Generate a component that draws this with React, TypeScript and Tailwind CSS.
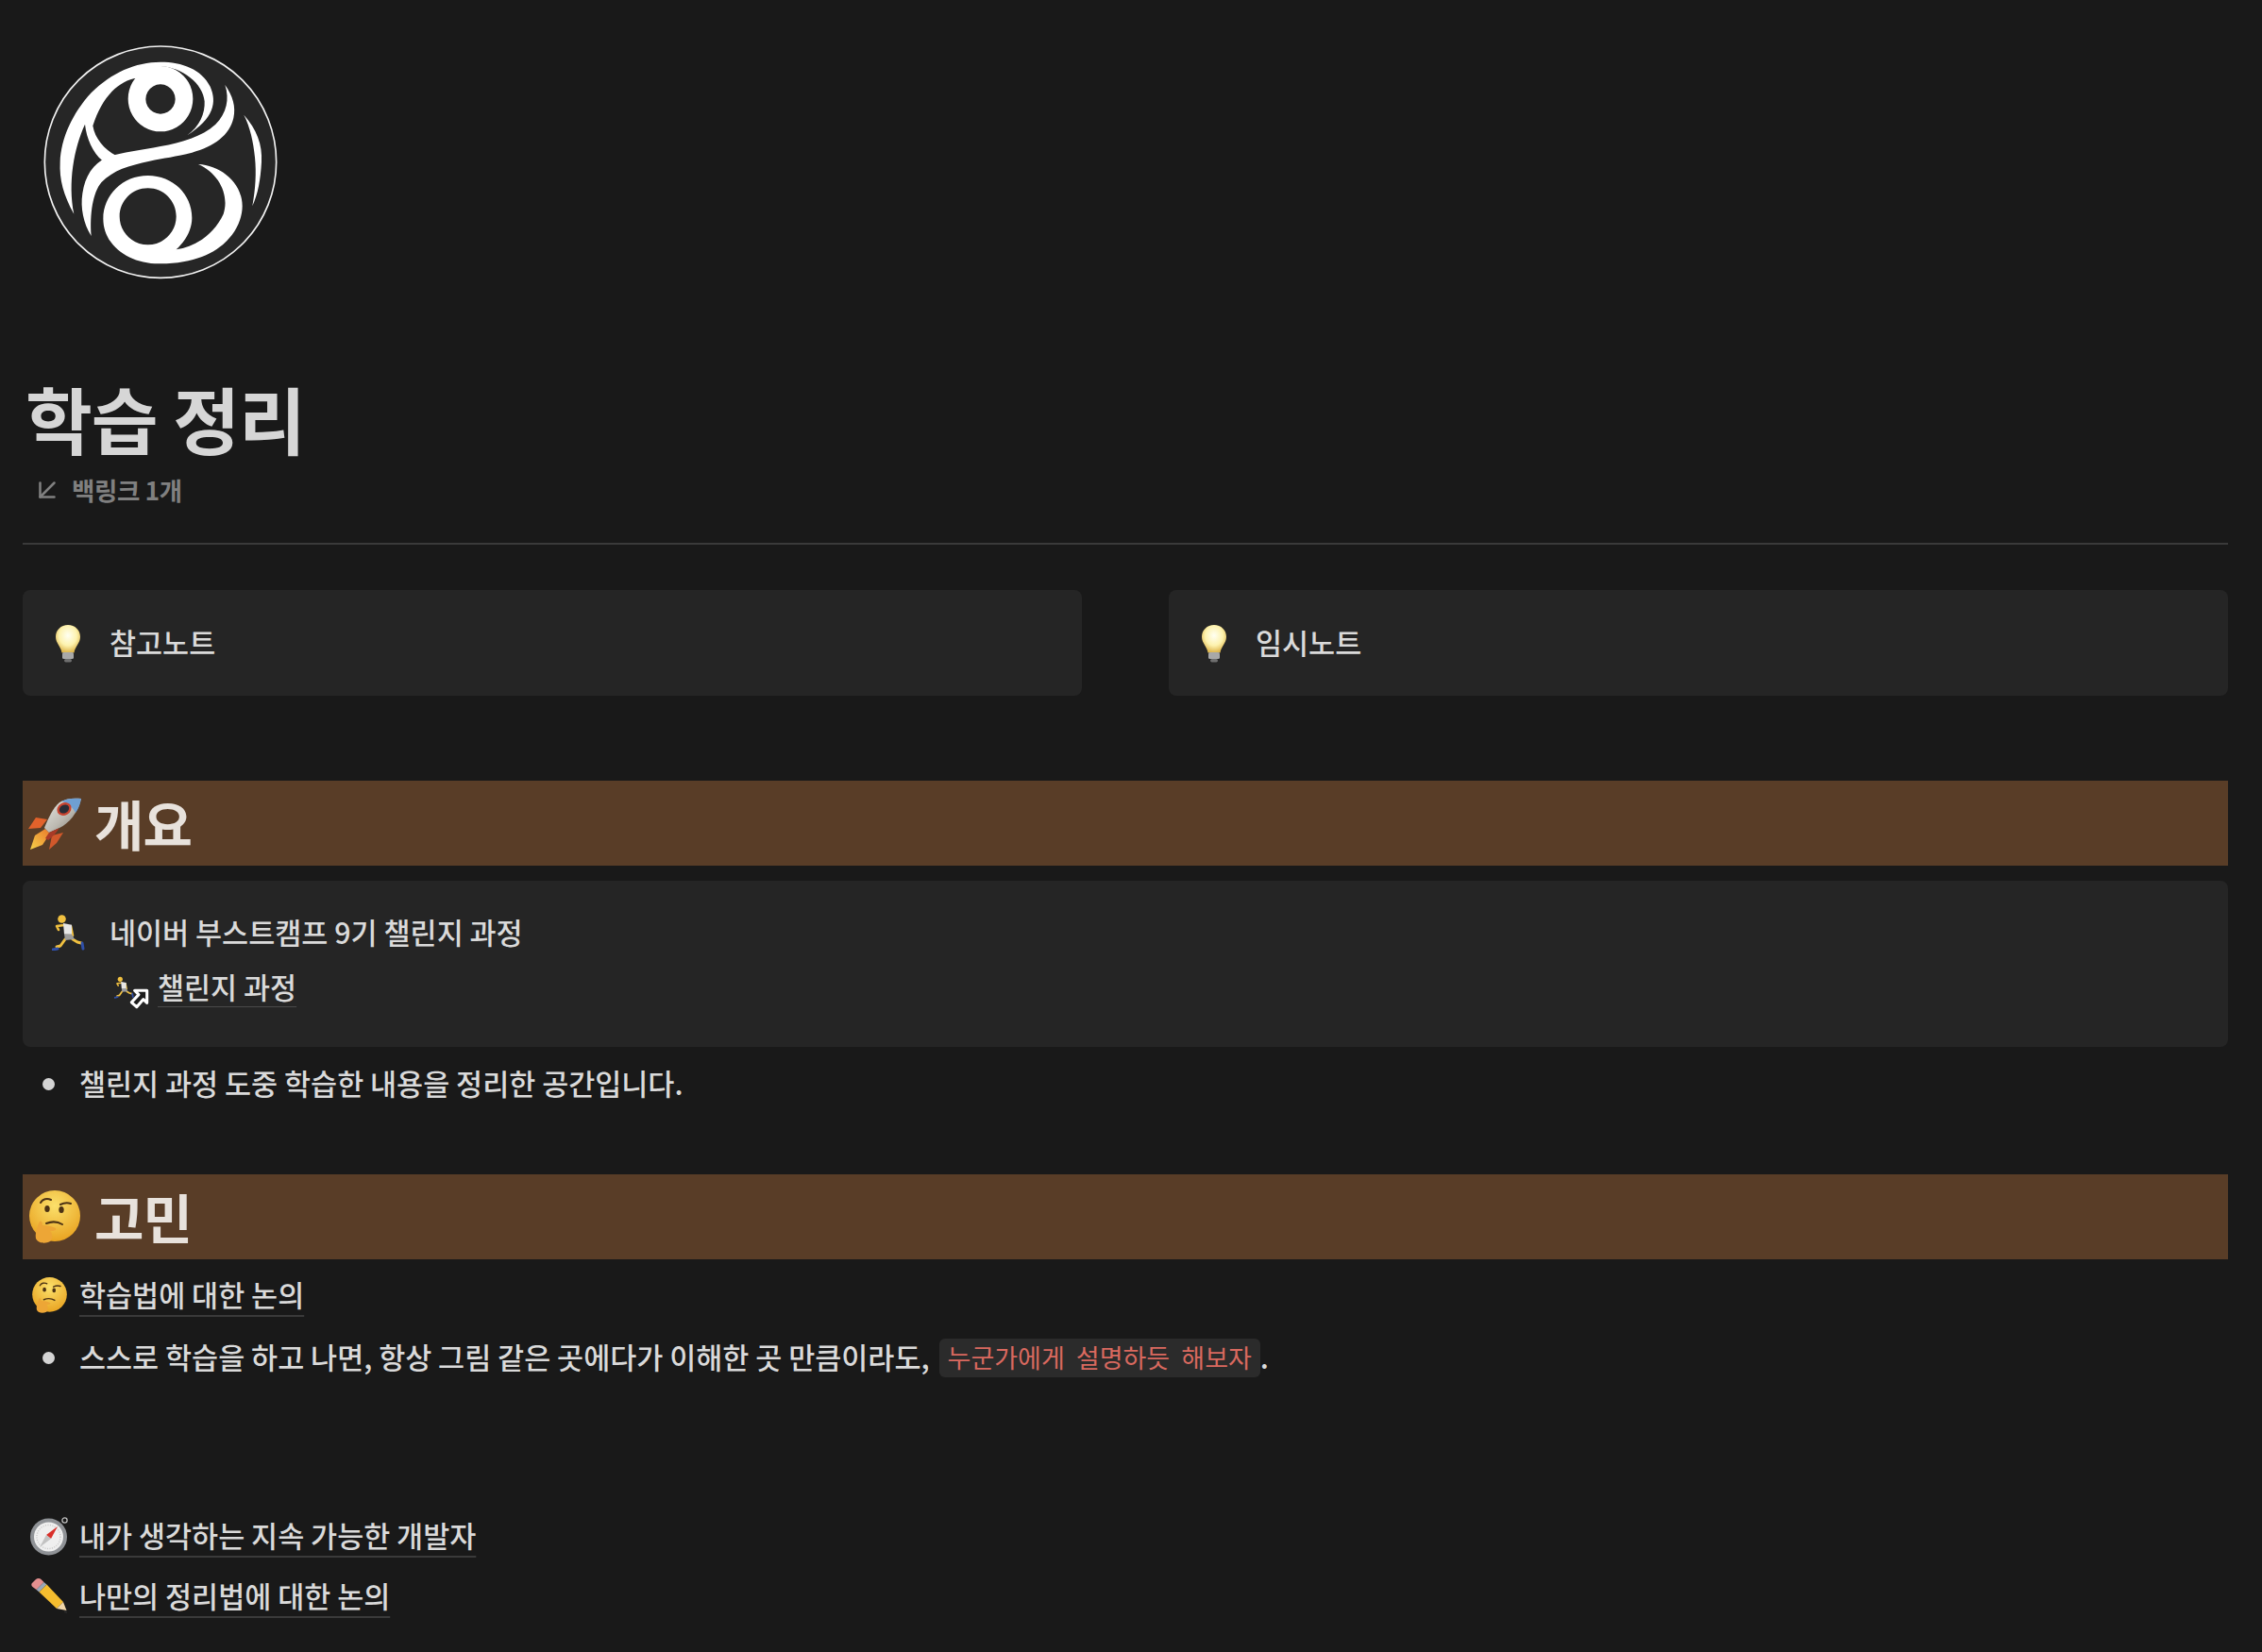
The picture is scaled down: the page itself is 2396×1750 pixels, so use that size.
import type { ReactNode } from "react";
import { ArrowDownLeft } from "lucide-react";

const Logo = () => (
  <svg viewBox="0 0 840 840" className="block w-[280px] h-[280px]">
    <circle cx="420" cy="425" r="368" fill="#262626" stroke="#f2f2f2" strokeWidth="5" />
    <g fill="#ffffff">
      <path fillRule="evenodd" d="M420 120a103 104 0 1 0 .01 0ZM420 178a47 47 0 1 1-.01 0Z" />
      <path d="M145 590C112 530 98 480 101 425C104 350 140 270 200 205C265 140 340 108 420 107C490 107 550 130 578 185C600 235 590 285 505 340C545 312 562 270 560 232C555 175 490 125 420 120L345 158C290 165 235 215 205 310C212 350 240 385 280 405L235 420C205 395 185 350 180 305C145 380 125 490 145 590Z" />
      <path d="M625 180C650 215 660 250 652 285C640 340 590 375 520 395C470 408 430 412 385 422C320 436 270 450 232 490C205 522 195 590 200 660C175 620 165 570 172 525C180 470 205 430 250 410C300 392 360 388 420 375C490 362 550 345 595 305C630 270 640 225 625 180Z" />
      <path fillRule="evenodd" d="M380 468C460 468 520 528 520 602C520 640 500 675 470 703C530 695 590 655 620 590C640 530 605 460 540 432C610 435 680 490 680 565C680 640 610 748 420 748C320 750 238 690 238 605C238 530 300 468 380 468ZM380 508C330 508 290 548 290 598C290 648 330 688 380 688C430 688 470 648 470 598C470 548 430 508 380 508Z" />
      <path d="M685 275C725 320 745 370 741 425C738 480 730 525 712 565C722 510 725 460 720 410C715 360 705 315 685 275Z" />
    </g>
  </svg>
);

const Bulb = () => (
  <svg viewBox="0 0 28 41" className="w-[28px] h-[41px] shrink-0">
    <defs>
      <radialGradient id="bulbGlow" cx="50%" cy="38%" r="60%">
        <stop offset="0%" stopColor="#fffff2" />
        <stop offset="60%" stopColor="#fdf2ae" />
        <stop offset="100%" stopColor="#dfb850" />
      </radialGradient>
    </defs>
    <path d="M14 1C6.500 1 1 6.500 1 13.500c0 7 5.500 10 6.500 17h13c1-7 6.500-10 6.500-17C27 6.500 21.500 1 14 1Z" fill="url(#bulbGlow)" />
    <rect x="8" y="30" width="12" height="7" rx="1.500" fill="#a8a8a8" />
    <rect x="10" y="37" width="8" height="3.500" rx="1.700" fill="#6f6f6f" />
  </svg>
);

const Rocket = () => (
  <svg viewBox="0 0 57 56" className="w-[57px] h-[56px] shrink-0">
    <defs>
      <linearGradient id="rocketBody" x1="0" y1="0" x2="1" y2="1">
        <stop offset="0%" stopColor="#e8e8e4" />
        <stop offset="55%" stopColor="#bdbab2" />
        <stop offset="100%" stopColor="#77736a" />
      </linearGradient>
      <linearGradient id="rocketFlame" x1="0" y1="1" x2="1" y2="0">
        <stop offset="0%" stopColor="#f6d24a" />
        <stop offset="100%" stopColor="#e9792b" />
      </linearGradient>
    </defs>
    <path d="M0 34L8 22l12 2-7 9Z" fill="#e2622b" />
    <path d="M22 56l3-15 12-3-7 11Z" fill="#d0582b" />
    <path d="M2 56L7 41l11-7 5 5-8 12Z" fill="url(#rocketFlame)" />
    <path d="M56 2C47 1 39 2 33 6 26 12 21 23 17 33l5 5 11-5C43 28 52 18 56 2Z" fill="url(#rocketBody)" />
    <path d="M56 2C47 1 40 2 35 5 41 6 47 11 50 17 53 13 55 8 56 2Z" fill="#6f9fd2" />
    <path d="M22 38l11-5c-4 6-7 9-12 13l-3-2Z" fill="#a83a26" />
    <ellipse cx="38" cy="13" rx="8" ry="6.500" transform="rotate(-30 38 13)" fill="#c7432f" />
    <ellipse cx="38" cy="13" rx="5.500" ry="4.200" transform="rotate(-30 38 13)" fill="#2a2d36" />
  </svg>
);

const Runner = ({ className }: { className: string }) => (
  <svg viewBox="0 0 35 38" className={className}>
    <g fill="none" strokeLinecap="round" strokeLinejoin="round">
      <path d="M14 26L9 33 5 34" stroke="#f0c040" strokeWidth="3" />
      <path d="M22 26l5 3 4 1" stroke="#f0c040" strokeWidth="3" />
      <path d="M13 11L5 12l2 4" stroke="#f0c040" strokeWidth="2.600" />
      <path d="M20 12l2 10" stroke="#f0c040" strokeWidth="2.600" />
      <path d="M1 37l5-1" stroke="#2f4fa8" strokeWidth="3" />
      <path d="M32 30l1 6" stroke="#2f4fa8" strokeWidth="3" />
    </g>
    <circle cx="10.500" cy="4.500" r="4.300" fill="#f0c040" />
    <path d="M12 9l9 1.700V21l-8-.3Z" fill="#e6e6e6" />
    <path d="M13 20.500h8l3 5.500-10 1Z" fill="#9c9c9c" />
  </svg>
);

const Thinking = ({ className, id }: { className: string; id: string }) => (
  <svg viewBox="0 0 54 56" className={className}>
    <defs>
      <radialGradient id={id} cx="50%" cy="30%" r="70%">
        <stop offset="0%" stopColor="#fbe06b" />
        <stop offset="100%" stopColor="#e9a422" />
      </radialGradient>
    </defs>
    <circle cx="27" cy="27" r="27" fill={`url(#${id})`} />
    <path d="M12 13c2-4 7-5 11-3M33 15c4-2 8-2 11-1" stroke="#4c3214" strokeWidth="2" fill="none" strokeLinecap="round" />
    <ellipse cx="19" cy="19.500" rx="2.700" ry="3.500" fill="#4c3214" />
    <ellipse cx="34" cy="20.500" rx="2.700" ry="3.500" fill="#4c3214" />
    <path d="M18 35c5-2 12-2 17 1" stroke="#4c3214" strokeWidth="2" fill="none" strokeLinecap="round" />
    <path d="M11 33c2-1 3 1 3 4 5 0 10 1 14 3 1 2-1 3-6 3 3 2 3 9 0 11-5 3-13 2-15-3-1-6 1-12 4-18Z" fill="#eda636" />
  </svg>
);

const Compass = () => (
  <svg viewBox="0 0 41 41" className="w-[41px] h-[41px] shrink-0">
    <circle cx="36.500" cy="3.500" r="2.600" fill="none" stroke="#bdbdbd" strokeWidth="1.300" />
    <circle cx="19.500" cy="21" r="19.500" fill="#8f9296" />
    <circle cx="19.500" cy="21" r="15.500" fill="#efefef" />
    <circle cx="19.500" cy="21" r="12.500" fill="none" stroke="#c9c9c9" strokeWidth="1.500" strokeDasharray="1 1.500" />
    <path d="M29 10l-7 13-5-4Z" fill="#d92f2a" />
    <path d="M10 32l7-13 5 4Z" fill="#c2c2c2" />
  </svg>
);

const Pencil = () => (
  <svg viewBox="0 0 40 40" className="w-[40px] h-[40px] shrink-0">
    <path d="M1 6l4-4c1.500-1.500 4-1.500 5.500 0l3 3-8 8-4-3C0 8.500 0 7 1 6Z" fill="#e48f8f" />
    <path d="M5.500 13l8-8 3 2.500-8 8Z" fill="#9aa7b8" />
    <path d="M8.500 15.500l8-8L34 26l-7 7Z" fill="#f5bd2f" />
    <path d="M27 33l7-7 3.500 9Z" fill="#f0d5a8" />
    <path d="M35 35.500l2.500-.5.500 3-3-1Z" fill="#2a2a2a" />
  </svg>
);

const PageLink = ({ text }: { text: string }) => (
  <span className="underline decoration-2 decoration-[#3a3a3a] underline-offset-[9px] [text-decoration-skip-ink:none]">
    {text}
  </span>
);

const Banner = ({ icon, text }: { icon: ReactNode; text: string }) => (
  <div className="h-[90px] bg-[#593d27] flex items-center pl-[4px] text-[57px] font-bold text-[#e8e2dc] tracking-[-1px]">
    <span className="w-[60px] mr-[12px] flex justify-center shrink-0">{icon}</span>
    <span>{text}</span>
  </div>
);

const Bullet = () => (
  <span className="w-[60px] flex justify-center shrink-0">
    <span className="w-[13px] h-[13px] rounded-full bg-[#d4d4d4] mr-[5px]" />
  </span>
);

export default function App() {
  return (
    <div
      className="h-[1750px] overflow-hidden bg-[#191919] text-[#dadada] text-[30.5px] font-medium pl-[24px] pr-[36px]"
      style={{ fontFamily: '"Noto Sans CJK KR", "Noto Sans", sans-serif' }}
    >
      <div className="pt-[30px] pl-[6px]">
        <Logo />
      </div>

      <h1 className="mt-[97px] pl-[3px] h-[72px] leading-[72px] text-[77px] font-bold text-[#d6d6d6] tracking-[-1px]">
        학습 정리
      </h1>
      <div className="mt-[25px] flex items-center h-[30px] pl-[8px] text-[26.5px] font-semibold text-[#808080] gap-[8px] tracking-[-0.4px]">
        <ArrowDownLeft size={36} strokeWidth={1.7} />
        <span>백링크 1개</span>
      </div>
      <div className="mt-[41px] h-[2px] bg-[#3a3a3a]" />

      <div className="mt-[48px] grid grid-cols-2 gap-[92px]">
        {["참고노트", "임시노트"].map((label) => (
          <div key={label} className="h-[112px] rounded-[8px] bg-[#252525] flex items-center pl-[34px] gap-[30px]">
            <Bulb />
            <span>{label}</span>
          </div>
        ))}
      </div>

      <div className="mt-[90px]">
        <Banner icon={<Rocket />} text="개요" />
      </div>

      <div className="mt-[16px] h-[176px] rounded-[8px] bg-[#252525] pt-[32px] pl-[31px]">
        <div className="flex items-center gap-[26px] h-[46px]">
          <Runner className="w-[35px] h-[38px] shrink-0" />
          <span>네이버 부스트캠프 9기 챌린지 과정</span>
        </div>
        <div className="mt-[12px] ml-[66px] flex items-center h-[46px]">
          <span className="relative w-[46px] h-[30px] shrink-0">
            <Runner className="w-[21px] h-[30px]" />
            <svg viewBox="0 0 21 22" className="absolute left-[15px] top-[15px] w-[23px] h-[24px]">
              <path d="M6 3h12v12l-3.500-3.500-6.500 7.500-5-4.500 7-7.500Z" fill="#1c1c1c" stroke="#ffffff" strokeWidth="2.800" strokeLinejoin="round" />
            </svg>
          </span>
          <span className="underline decoration-1 decoration-[#4a4a4a] underline-offset-[8px] [text-decoration-skip-ink:none]">
            챌린지 과정
          </span>
        </div>
      </div>

      <div className="mt-[19px] h-[40px] flex items-center">
        <Bullet />
        <span>챌린지 과정 도중 학습한 내용을 정리한 공간입니다.</span>
      </div>

      <div className="mt-[76px]">
        <Banner icon={<Thinking className="w-[54px] h-[56px] shrink-0" id="faceLarge" />} text="고민" />
      </div>

      <div className="mt-[14px] h-[48px] flex items-center">
        <span className="w-[60px] flex justify-center shrink-0">
          <span className="mr-[3px] flex">
            <Thinking className="w-[37px] h-[38px] shrink-0" id="faceSmall" />
          </span>
        </span>
        <PageLink text="학습법에 대한 논의" />
      </div>

      <div className="mt-[20px] h-[44px] flex items-center">
        <Bullet />
        <span>스스로 학습을 하고 나면, 항상 그림 같은 곳에다가 이해한 곳 만큼이라도,</span>
        <span className="ml-[10px] h-[41px] flex items-center rounded-[6px] bg-[#2b2b2b] px-[9px] text-[27px] font-normal text-[#d9695f] whitespace-pre">
          누군가에게  설명하듯  해보자
        </span>
        <span>.</span>
      </div>

      <div className="mt-[143px] h-[48px] flex items-center">
        <span className="w-[60px] flex justify-center shrink-0">
          <span className="mr-[3px] flex">
            <Compass />
          </span>
        </span>
        <PageLink text="내가 생각하는 지속 가능한 개발자" />
      </div>

      <div className="mt-[16px] h-[48px] flex items-center">
        <span className="w-[60px] flex justify-center shrink-0">
          <span className="mr-[3px] flex">
            <Pencil />
          </span>
        </span>
        <PageLink text="나만의 정리법에 대한 논의" />
      </div>
    </div>
  );
}
